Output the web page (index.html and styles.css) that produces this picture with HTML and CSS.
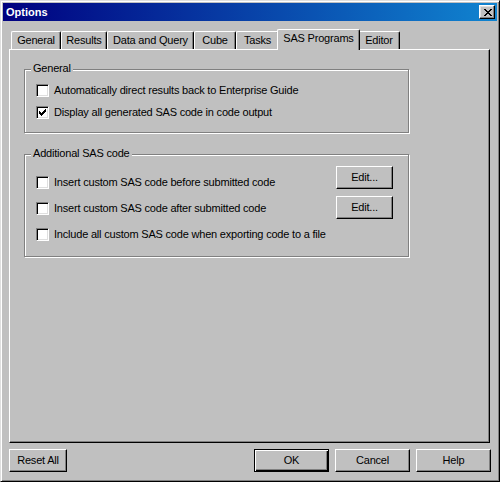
FILE: index.html
```html
<!DOCTYPE html>
<html>
<head>
<meta charset="utf-8">
<title>Options</title>
<link rel="stylesheet" href="styles.css">
</head>
<body>
<div class="window">
  <div class="titlebar">
    <span class="title">Options</span>
    <span class="close">
      <svg width="8" height="7" viewBox="0 0 8 7" shape-rendering="crispEdges">
        <rect x="0" y="0" width="2" height="1" fill="#000"/><rect x="6" y="0" width="2" height="1" fill="#000"/>
        <rect x="1" y="1" width="2" height="1" fill="#000"/><rect x="5" y="1" width="2" height="1" fill="#000"/>
        <rect x="2" y="2" width="4" height="1" fill="#000"/>
        <rect x="3" y="3" width="2" height="1" fill="#000"/>
        <rect x="2" y="4" width="4" height="1" fill="#000"/>
        <rect x="1" y="5" width="2" height="1" fill="#000"/><rect x="5" y="5" width="2" height="1" fill="#000"/>
        <rect x="0" y="6" width="2" height="1" fill="#000"/><rect x="6" y="6" width="2" height="1" fill="#000"/>
      </svg>
    </span>
  </div>
  <div class="body">
    <div class="tabs">
      <div class="tab tab-general">General</div>
      <div class="tab tab-results">Results</div>
      <div class="tab tab-data">Data and Query</div>
      <div class="tab tab-cube">Cube</div>
      <div class="tab tab-tasks">Tasks</div>
      <div class="tab tab-sas active">SAS Programs</div>
      <div class="tab tab-editor">Editor</div>
    </div>
    <div class="panel">
      <div class="group group-general">
        <span class="legend">General</span>
        <div class="rows rows-general">
          <div class="row"><span class="cb"></span><span>Automatically direct results back to Enterprise Guide</span></div>
          <div class="row"><span class="cb"><svg class="check" width="7" height="7" viewBox="0 0 7 7" shape-rendering="crispEdges"><rect x="0" y="2" width="1" height="3"/><rect x="1" y="3" width="1" height="3"/><rect x="2" y="4" width="1" height="3"/><rect x="3" y="3" width="1" height="3"/><rect x="4" y="2" width="1" height="3"/><rect x="5" y="1" width="1" height="3"/><rect x="6" y="0" width="1" height="3"/></svg></span><span>Display all generated SAS code in code output</span></div>
        </div>
      </div>
      <div class="group group-addl">
        <span class="legend">Additional SAS code</span>
        <div class="rows rows-addl">
          <div class="row"><span class="cb"></span><span>Insert custom SAS code before submitted code</span></div>
          <div class="row"><span class="cb"></span><span>Insert custom SAS code after submitted code</span></div>
          <div class="row"><span class="cb"></span><span>Include all custom SAS code when exporting code to a file</span></div>
        </div>
        <div class="edit-col">
          <button class="btn edit">Edit...</button>
          <button class="btn edit">Edit...</button>
        </div>
      </div>
    </div>
    <div class="footer">
      <button class="btn reset">Reset All</button>
      <div class="spacer"></div>
      <button class="btn std default">OK</button>
      <button class="btn std">Cancel</button>
      <button class="btn std">Help</button>
    </div>
  </div>
</div>
</body>
</html>
```
FILE: styles.css
```css
* { box-sizing: border-box; }
html, body { margin: 0; padding: 0; background: #c0c0c0; }
body {
  font-family: "Liberation Sans", Arial, sans-serif;
  font-size: 11px;
  letter-spacing: -0.2px;
  color: #000;
}
.window {
  width: 500px;
  height: 482px;
  background: #c0c0c0;
  border: 1px solid;
  border-color: #dfdfdf #000 #000 #dfdfdf;
  box-shadow: inset 1px 1px #fff, inset -1px -1px #808080;
  padding: 2px;
  display: flex;
  flex-direction: column;
}
.titlebar {
  height: 18px;
  flex: none;
  display: flex;
  align-items: center;
  justify-content: space-between;
  padding-left: 3px;
  padding-right: 2px;
  background: linear-gradient(90deg, #000080, #1084d0);
}
.title {
  color: #fff;
  font-weight: bold;
  letter-spacing: 0;
  line-height: 13px;
}
.close {
  width: 16px;
  height: 14px;
  background: #c0c0c0;
  border: 1px solid;
  border-color: #fff #000 #000 #fff;
  box-shadow: inset -1px -1px #808080, inset 1px 1px #dfdfdf;
  display: flex;
  align-items: center;
  justify-content: center;
  padding-left: 1px;
}
.close svg { display: block; }
.body {
  flex: 1;
  display: flex;
  flex-direction: column;
  padding: 8px 7px 0 6px;
}
.tabs {
  height: 20px;
  display: flex;
  align-items: flex-end;
  padding-left: 2px;
  position: relative;
  z-index: 1;
}
.tab {
  height: 18px;
  flex: none;
  display: flex;
  align-items: center;
  justify-content: center;
  white-space: nowrap;
  background: #c0c0c0;
  border-left: 1px solid #fff;
  border-top: 1px solid #fff;
  border-right: 1px solid #000;
  border-radius: 2px 2px 0 0;
  box-shadow: inset -1px 0 #808080;
  line-height: 13px;
}
.tab-general { width: 50px; }
.tab-results { width: 46px; }
.tab-data { width: 87px; }
.tab-cube { width: 42px; }
.tab-tasks { width: 43px; }
.tab-sas { width: 79px; }
.tab-editor { width: 42px; }
.tab.active {
  width: 83px;
  height: 21px;
  margin: 0 -2px -1px -2px;
  padding-bottom: 3px;
  position: relative;
  z-index: 2;
}
.panel {
  height: 394px;
  flex: none;
  border: 1px solid;
  border-color: #fff #000 #000 #fff;
  box-shadow: inset -1px -1px #808080;
  padding: 19px 0 0 14px;
}
.group {
  position: relative;
  width: 385px;
  border: 1px solid #808080;
  box-shadow: inset 1px 1px #fff, 1px 1px #fff;
}
.group-general { height: 64px; }
.group-addl {
  height: 103px;
  margin-top: 21px;
  display: flex;
}
.legend {
  position: absolute;
  left: 6px;
  top: -8px;
  padding: 0 2px;
  line-height: 13px;
  background: #c0c0c0;
  white-space: nowrap;
}
.rows {
  display: flex;
  flex-direction: column;
  padding-left: 11px;
}
.rows-general { padding-top: 14px; gap: 9px; }
.rows-addl { padding-top: 21px; gap: 13px; flex: 1; }
.row {
  height: 13px;
  display: flex;
  align-items: center;
  gap: 5px;
  white-space: nowrap;
  line-height: 13px;
}
.cb {
  width: 13px;
  height: 13px;
  flex: none;
  background: #fff;
  border: 1px solid;
  border-color: #808080 #fff #fff #808080;
  box-shadow: inset 1px 1px #000, inset -1px -1px #dfdfdf;
  position: relative;
}
.check {
  position: absolute;
  left: 2px;
  top: 2px;
  fill: #000;
}
.edit-col {
  display: flex;
  flex-direction: column;
  gap: 7px;
  padding-top: 11px;
  margin-right: 15px;
}
.btn {
  font: inherit;
  letter-spacing: inherit;
  color: #000;
  height: 23px;
  padding: 0;
  margin: 0;
  background: #c0c0c0;
  border: 1px solid;
  border-color: #fff #000 #000 #fff;
  box-shadow: inset -1px -1px #808080;
  line-height: 13px;
  text-align: center;
}
.btn.edit { width: 57px; }
.footer {
  margin-top: 6px;
  margin-right: -1px;
  height: 23px;
  display: flex;
  gap: 6px;
}
.spacer { flex: 1; }
.btn.reset { width: 58px; }
.btn.std { width: 75px; }
.btn.default {
  border-color: #000;
  box-shadow: inset 1px 1px #fff, inset -1px -1px #000, inset -2px -2px #808080;
}
```
